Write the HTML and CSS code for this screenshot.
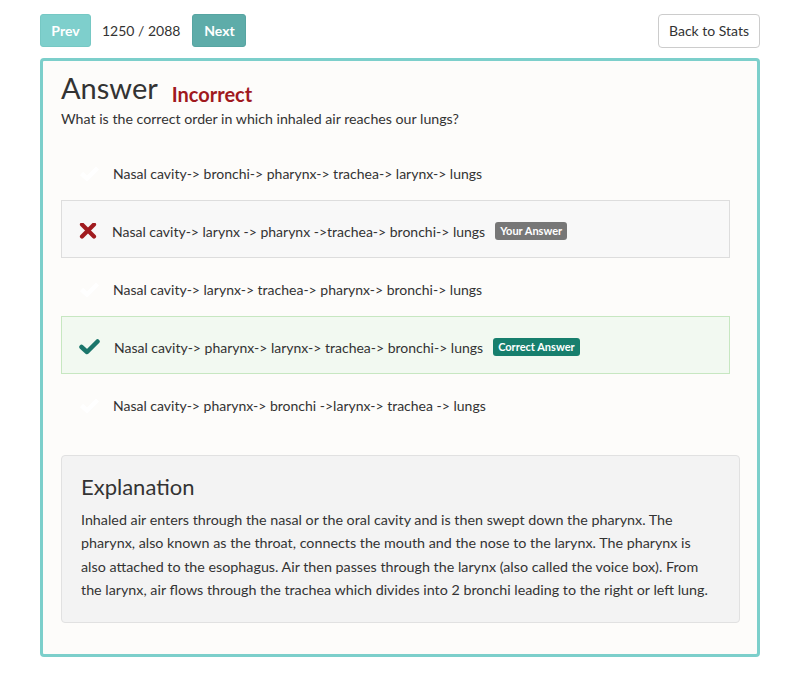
FILE: index.html
```html
<!DOCTYPE html>
<html lang="en">
<head>
<meta charset="utf-8">
<title>Answer</title>
<link rel="stylesheet" href="styles.css">
</head>
<body>
<div class="page">
  <div class="topbar">
    <div class="nav">
      <button class="btn btn-prev">Prev</button>
      <span class="counter">1250 / 2088</span>
      <button class="btn btn-next">Next</button>
    </div>
    <button class="btn-back">Back to Stats</button>
  </div>

  <div class="card">
    <div class="title-row">
      <h1 class="title">Answer</h1>
      <span class="verdict">Incorrect</span>
    </div>
    <p class="question">What is the correct order in which inhaled air reaches our lungs?</p>

    <ul class="options">
      <li class="option">
        <span class="icon"><svg width="21" height="16" viewBox="0 0 21 16"><polyline points="2.5,8.5 8,13.5 18.5,3" fill="none" stroke="#ffffff" stroke-width="4.5" stroke-linejoin="miter"/></svg></span>
        <span class="opt-text">Nasal cavity-&gt; bronchi-&gt; pharynx-&gt; trachea-&gt; larynx-&gt; lungs</span>
      </li>
      <li class="option option-wrong">
        <span class="icon"><svg width="21" height="16" viewBox="0 0 21 16"><path d="M3 1.5 L15 13.5 M15 1.5 L3 13.5" fill="none" stroke="#a11b1f" stroke-width="4.2" stroke-linecap="round"/></svg></span>
        <span class="opt-text">Nasal cavity-&gt; larynx -&gt; pharynx -&gt;trachea-&gt; bronchi-&gt; lungs</span>
        <span class="badge badge-yours">Your Answer</span>
      </li>
      <li class="option">
        <span class="icon"><svg width="21" height="16" viewBox="0 0 21 16"><polyline points="2.5,8.5 8,13.5 18.5,3" fill="none" stroke="#ffffff" stroke-width="4.5"/></svg></span>
        <span class="opt-text">Nasal cavity-&gt; larynx-&gt; trachea-&gt; pharynx-&gt; bronchi-&gt; lungs</span>
      </li>
      <li class="option option-right">
        <span class="icon"><svg width="21" height="16" viewBox="0 0 21 16"><polyline points="2.5,8 8,13 18.5,2.5" fill="none" stroke="#1b766b" stroke-width="4.5" stroke-linecap="round" stroke-linejoin="round"/></svg></span>
        <span class="opt-text">Nasal cavity-&gt; pharynx-&gt; larynx-&gt; trachea-&gt; bronchi-&gt; lungs</span>
        <span class="badge badge-correct">Correct Answer</span>
      </li>
      <li class="option">
        <span class="icon"><svg width="21" height="16" viewBox="0 0 21 16"><polyline points="2.5,8.5 8,13.5 18.5,3" fill="none" stroke="#ffffff" stroke-width="4.5"/></svg></span>
        <span class="opt-text">Nasal cavity-&gt; pharynx-&gt; bronchi -&gt;larynx-&gt; trachea -&gt; lungs</span>
      </li>
    </ul>

    <div class="explanation">
      <h2 class="exp-title">Explanation</h2>
      <p class="exp-text">Inhaled air enters through the nasal or the oral cavity and is then swept down the pharynx. The<br>pharynx, also known as the throat, connects the mouth and the nose to the larynx. The pharynx is<br>also attached to the esophagus. Air then passes through the larynx (also called the voice box). From<br>the larynx, air flows through the trachea which divides into 2 bronchi leading to the right or left lung.</p>
    </div>
  </div>
</div>
</body>
</html>
```

FILE: styles.css
```css
* { box-sizing: border-box; }

body {
  margin: 0;
  background: #ffffff;
  font-family: Lato, "Open Sans", "Liberation Sans", sans-serif;
  color: #333333;
}

.page {
  padding: 14px 40px 0 40px;
}

.topbar {
  display: flex;
  justify-content: space-between;
  align-items: center;
  height: 33px;
}

.nav {
  display: flex;
  align-items: center;
}

.btn {
  height: 33px;
  border: 1px solid transparent;
  border-radius: 3px;
  color: #ffffff;
  font-family: inherit;
  font-weight: 700;
  font-size: 14px;
  padding: 0;
  cursor: pointer;
}

.btn-prev {
  width: 51px;
  background: #7ecfcc;
  border-color: #76c8c4;
}

.btn-next {
  width: 54px;
  background: #5eaca9;
  border-color: #57a5a2;
}

.counter {
  font-size: 14px;
  color: #333333;
  margin: 0 12px 0 11px;
}

.btn-back {
  height: 34px;
  width: 102px;
  background: #ffffff;
  border: 1px solid #cccccc;
  border-radius: 4px;
  font-family: inherit;
  font-size: 14px;
  color: #333333;
  padding: 0;
}

.card {
  margin-top: 11px;
  width: 720px;
  border: 3px solid #7ccfcb;
  border-radius: 4px;
  background: #fdfcfa;
  padding: 10px 27px 31px 18px;
}

.title-row {
  display: flex;
  align-items: baseline;
}

.title {
  margin: 0;
  font-size: 29px;
  font-weight: 400;
  line-height: 34px;
  color: #333333;
}

.verdict {
  margin-left: 14px;
  font-size: 20px;
  font-weight: 700;
  color: #a0191e;
  position: relative;
  top: 3px;
}

.question {
  margin: 4px 0 0 0;
  font-size: 14.2px;
  line-height: 20px;
}

.options {
  list-style: none;
  margin: 13px 0 0 0;
  padding: 0;
}

.option {
  display: flex;
  align-items: center;
  height: 58px;
  padding: 4px 0 0 17px;
  border: 1px solid transparent;
  font-size: 14px;
}

.option-wrong {
  background: #f8f8f8;
  border-color: #dddddd;
}

.option-right {
  background: #f2f9f1;
  border-color: #c7e7c1;
}

.icon {
  width: 21px;
  height: 16px;
  display: flex;
  margin-right: 13px;
}

.option-wrong .icon { margin-right: 12px; }
.option-right .icon { margin-right: 14px; }

.opt-text {
  color: #333333;
}

.badge {
  margin-left: 10px;
  height: 18px;
  padding: 0 5px;
  border-radius: 3px;
  color: #ffffff;
  font-size: 11px;
  font-weight: 700;
  line-height: 18px;
}

.badge-yours { background: #777777; }
.badge-correct { background: #177f6d; }

.explanation {
  margin: 23px -10px 0 0;
  background: #f3f3f3;
  border: 1px solid #e1e1e1;
  border-radius: 4px;
  padding: 17px 19px 21px 19px;
}

.exp-title {
  margin: 0;
  font-size: 22px;
  font-weight: 400;
  line-height: 28px;
  color: #333333;
}

.exp-text {
  margin: 7px 0 0 0;
  font-size: 14.3px;
  line-height: 23.3px;
  color: #333333;
}
```
